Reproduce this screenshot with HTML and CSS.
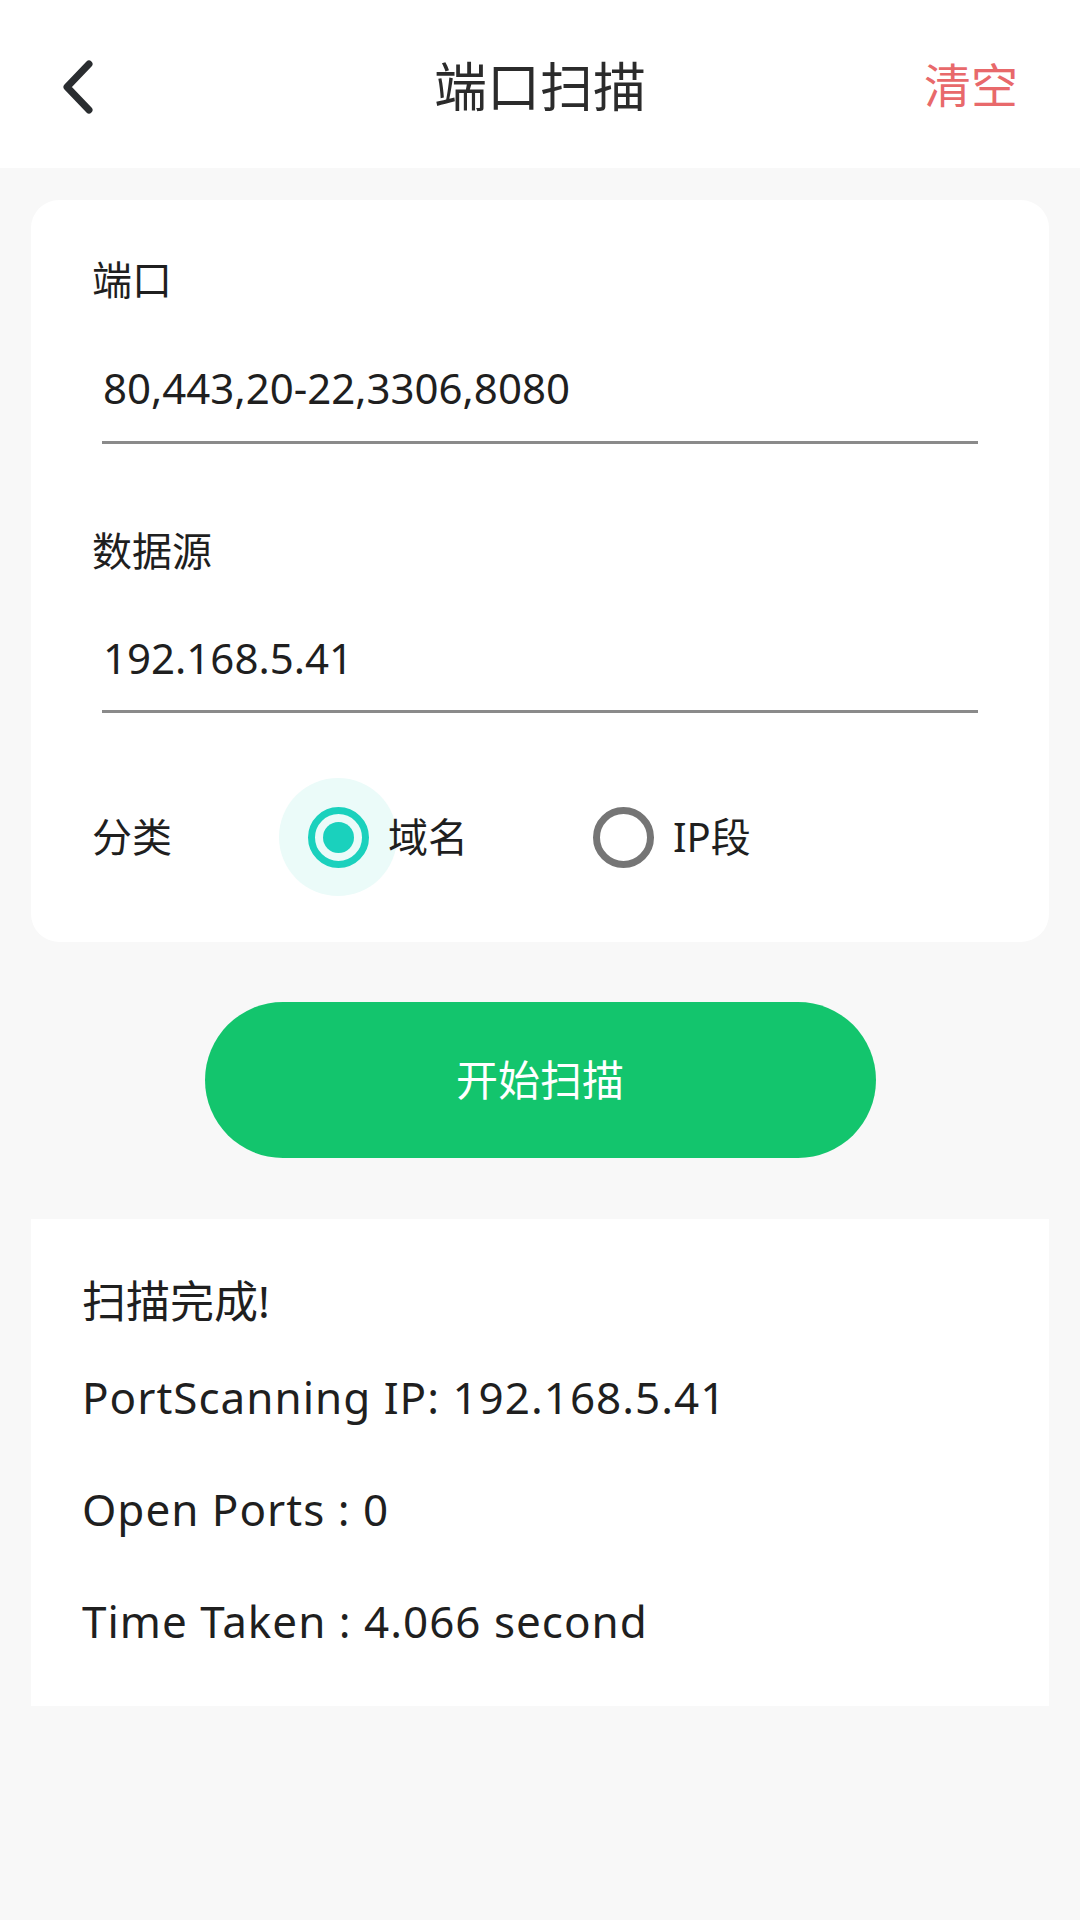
FILE: index.html
```html
<!DOCTYPE html>
<html lang="zh-CN">
<head>
<meta charset="utf-8">
<title>端口扫描</title>
<link rel="stylesheet" href="styles.css">
</head>
<body>
<header class="topbar">
  <div class="topbar-left">
    <svg class="back-icon" width="44" height="64" viewBox="0 0 44 64" aria-hidden="true">
      <path d="M33 12 L11 35 L33 58" fill="none" stroke="#2a2d30" stroke-width="7" stroke-linecap="round" stroke-linejoin="round"/>
    </svg>
  </div>
  <h1 class="topbar-title">端口扫描</h1>
  <div class="topbar-right"><span class="clear-btn">清空</span></div>
</header>

<main class="content">
  <section class="card form-card">
    <div class="field-label">端口</div>
    <div class="field-input">80,443,20-22,3306,8080</div>

    <div class="field-label field-label-next">数据源</div>
    <div class="field-input">192.168.5.41</div>

    <div class="radio-row">
      <div class="radio-label">分类</div>
      <div class="radio-option radio-option-first">
        <span class="radio radio-checked"><span class="radio-dot"></span></span>
        <span class="radio-text">域名</span>
      </div>
      <div class="radio-option">
        <span class="radio"></span>
        <span class="radio-text">IP段</span>
      </div>
    </div>
  </section>

  <div class="button-wrap">
    <button class="scan-btn">开始扫描</button>
  </div>

  <section class="result-card">
    <div class="result-line result-title">扫描完成!</div>
    <div class="result-line">PortScanning IP: 192.168.5.41</div>
    <div class="result-line">Open Ports : 0</div>
    <div class="result-line">Time Taken : 4.066 second</div>
  </section>
</main>
</body>
</html>
```

FILE: styles.css
```css
* {
  box-sizing: border-box;
}

html, body {
  margin: 0;
  padding: 0;
}

body {
  width: 1080px;
  min-height: 1920px;
  background: #f8f8f8;
  font-family: "Noto Sans", "Noto Sans CJK SC", sans-serif;
  color: #1f1f1f;
}

.topbar {
  height: 168px;
  background: #ffffff;
  display: grid;
  grid-template-columns: 1fr auto 1fr;
  align-items: center;
}

.topbar-left {
  display: flex;
  align-items: center;
  padding-left: 56px;
}

.back-icon {
  display: block;
}

.topbar-title {
  margin: 0;
  font-size: 53px;
  font-weight: 400;
  color: #2b2b2b;
  line-height: 1;
  padding-top: 4px;
}

.topbar-right {
  display: flex;
  justify-content: flex-end;
  padding-right: 62px;
}

.clear-btn {
  font-size: 47px;
  line-height: 1;
  color: #e8696b;
  padding-top: 2px;
}

.content {
  display: flex;
  flex-direction: column;
  padding: 32px 31px 0;
}

.card {
  background: #ffffff;
  border-radius: 28px;
}

.form-card {
  position: relative;
  z-index: 0;
  padding: 50px 61px 46px;
}

.field-label {
  font-size: 40px;
  line-height: 60px;
  height: 60px;
  color: #1f1f1f;
}

.field-label-next {
  margin-top: 77px;
}

.field-input {
  margin: 0 10px;
  padding: 48px 0 23px 1px;
  font-size: 42px;
  line-height: 60px;
  color: #1f1f1f;
  border-bottom: 3px solid #8a8a8a;
}

.field-input + .field-label-next + .field-input {
  padding-top: 47px;
  padding-bottom: 22px;
}

.radio-row {
  margin-top: 65px;
  height: 118px;
  display: flex;
  align-items: center;
}

.radio-label {
  width: 216px;
  font-size: 40px;
  line-height: 60px;
}

.radio-option {
  display: flex;
  align-items: center;
  gap: 19px;
}

.radio-option-first {
  width: 285px;
}

.radio {
  position: relative;
  width: 61px;
  height: 61px;
  border-radius: 50%;
  border: 7px solid #757575;
  display: flex;
  align-items: center;
  justify-content: center;
  flex: none;
}

.radio-checked {
  border-color: #1ad1bd;
}

.radio-checked::before {
  content: "";
  position: absolute;
  left: 50%;
  top: 50%;
  width: 118px;
  height: 118px;
  margin: -59px 0 0 -60px;
  border-radius: 50%;
  background: #ebfbf9;
  z-index: -1;
}

.radio-dot {
  width: 31px;
  height: 31px;
  border-radius: 50%;
  background: #1ad1bd;
}

.radio-text {
  font-size: 40px;
  line-height: 60px;
  color: #1f1f1f;
}

.button-wrap {
  display: flex;
  justify-content: center;
  margin-top: 60px;
}

.scan-btn {
  width: 671px;
  height: 156px;
  border: none;
  border-radius: 78px;
  background: #13c56d;
  color: #ffffff;
  font-family: "Noto Sans", "Noto Sans CJK SC", sans-serif;
  font-size: 42px;
  line-height: 1;
  padding: 0;
}

.result-card {
  margin-top: 61px;
  background: #ffffff;
  padding: 42px 40px 29px 51px;
}

.result-line {
  font-size: 44px;
  line-height: 112px;
  letter-spacing: 1px;
  color: #1f1f1f;
}

.result-title {
  line-height: 80px;
  letter-spacing: 0;
}
```
